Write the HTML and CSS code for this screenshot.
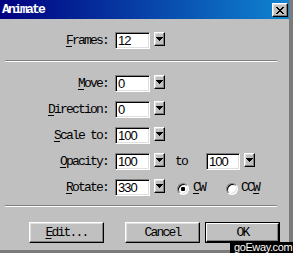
FILE: index.html
```html
<!DOCTYPE html>
<html>
<head>
<meta charset="utf-8">
<link rel="stylesheet" href="styles.css">
</head>
<body>
<div class="window">
  <div class="titlebar">
    <span class="title">Animate</span>
    <span class="close">
      <svg width="8" height="7" viewBox="0 0 8 7" shape-rendering="crispEdges"><path d="M0 0h2v1H0zM6 0h2v1H6zM1 1h2v1H1zM5 1h2v1H5zM2 2h4v1H2zM3 3h2v1H3zM2 4h4v1H2zM1 5h2v1H1zM5 5h2v1H5zM0 6h2v1H0zM6 6h2v1H6z" fill="#000"/></svg>
    </span>
  </div>
  <div class="row frames">
    <span class="lbl"><u>F</u>rames:</span>
    <span class="field">12</span>
    <span class="dd"><svg width="7" height="4" viewBox="0 0 7 4" shape-rendering="crispEdges"><path d="M0 0h7v1H0zM1 1h5v1H1zM2 2h3v1H2zM3 3h1v1H3z" fill="#000"/></svg></span>
  </div>
  <div class="sep"></div>
  <div class="rows">
    <div class="row">
      <span class="lbl"><u>M</u>ove:</span>
      <span class="field">0</span>
      <span class="dd"><svg width="7" height="4" viewBox="0 0 7 4" shape-rendering="crispEdges"><path d="M0 0h7v1H0zM1 1h5v1H1zM2 2h3v1H2zM3 3h1v1H3z" fill="#000"/></svg></span>
    </div>
    <div class="row">
      <span class="lbl"><u>D</u>irection:</span>
      <span class="field">0</span>
      <span class="dd"><svg width="7" height="4" viewBox="0 0 7 4" shape-rendering="crispEdges"><path d="M0 0h7v1H0zM1 1h5v1H1zM2 2h3v1H2zM3 3h1v1H3z" fill="#000"/></svg></span>
    </div>
    <div class="row">
      <span class="lbl"><u>S</u>cale to:</span>
      <span class="field">100</span>
      <span class="dd"><svg width="7" height="4" viewBox="0 0 7 4" shape-rendering="crispEdges"><path d="M0 0h7v1H0zM1 1h5v1H1zM2 2h3v1H2zM3 3h1v1H3z" fill="#000"/></svg></span>
    </div>
    <div class="row">
      <span class="lbl"><u>O</u>pacity:</span>
      <span class="field">100</span>
      <span class="dd"><svg width="7" height="4" viewBox="0 0 7 4" shape-rendering="crispEdges"><path d="M0 0h7v1H0zM1 1h5v1H1zM2 2h3v1H2zM3 3h1v1H3z" fill="#000"/></svg></span>
      <span class="to">to</span>
      <span class="field field2">100</span>
      <span class="dd"><svg width="7" height="4" viewBox="0 0 7 4" shape-rendering="crispEdges"><path d="M0 0h7v1H0zM1 1h5v1H1zM2 2h3v1H2zM3 3h1v1H3z" fill="#000"/></svg></span>
    </div>
    <div class="row">
      <span class="lbl"><u>R</u>otate:</span>
      <span class="field">330</span>
      <span class="dd"><svg width="7" height="4" viewBox="0 0 7 4" shape-rendering="crispEdges"><path d="M0 0h7v1H0zM1 1h5v1H1zM2 2h3v1H2zM3 3h1v1H3z" fill="#000"/></svg></span>
      <span class="radio r1 checked"><span class="dot"></span></span>
      <span class="rlbl cw"><u>C</u>W</span>
      <span class="radio r2"></span>
      <span class="rlbl ccw">CC<u>W</u></span>
    </div>
  </div>
  <div class="sep sep2"></div>
  <div class="buttons">
    <span class="btn edit"><u>E</u>dit...</span>
    <span class="btn cancel">Cancel</span>
    <span class="btn ok"><span class="okin">OK</span></span>
  </div>
</div>
<div class="watermark">goEway.com</div>
</body>
</html>
```

FILE: styles.css
```css
* { box-sizing: border-box; }
html, body { margin: 0; padding: 0; }
body {
  position: relative;
  width: 293px;
  height: 253px;
  overflow: hidden;
  background: #808080;
  font-family: "Liberation Mono", "DejaVu Sans Mono", monospace;
  font-size: 13px;
  color: #000;
}
.window {
  width: 293px;
  height: 253px;
  background: #c0c0c0;
  border-right: 4px solid #7b7b7b;
  border-bottom: 3px solid #7b7b7b;
  display: flex;
  flex-direction: column;
}
.titlebar {
  height: 19px;
  flex: none;
  background: linear-gradient(90deg, #000080 0%, #1084d0 100%);
  display: flex;
  align-items: flex-start;
  justify-content: space-between;
  padding-left: 2px;
}
.title {
  color: #fff;
  font-weight: bold;
  font-size: 13px;
  letter-spacing: -1.8px;
  line-height: 19px;
}
.close {
  width: 16px;
  height: 14px;
  margin-top: 3px;
  margin-right: 1px;
  background: #c0c0c0;
  border: 1px solid;
  border-color: #fff #000 #000 #fff;
  box-shadow: inset -1px -1px #808080, inset 1px 1px #dfdfdf;
  display: flex;
  align-items: center;
  justify-content: center;
}
.close svg { display: block; }
.row {
  display: flex;
  align-items: flex-start;
  height: 17px;
  line-height: 17px;
  flex: none;
}
.frames { margin-top: 13px; }
.lbl {
  width: 108px;
  text-align: right;
  white-space: pre;
  letter-spacing: -1.8px;
}
u { text-decoration: underline; text-underline-offset: 2px; }
.field {
  margin-left: 7px;
  width: 35px;
  height: 17px;
  background: #fff;
  border: 1px solid;
  border-color: #808080 #fff #fff #808080;
  box-shadow: inset 1px 1px #000, inset -1px -1px #dfdfdf;
  font-family: "Liberation Sans", Arial, sans-serif;
  font-size: 13px;
  letter-spacing: -1px;
  line-height: 15px;
  padding-left: 2px;
  overflow: hidden;
}
.dd {
  margin-left: 4px;
  width: 11px;
  height: 14px;
  background: #c0c0c0;
  border: 1px solid;
  border-color: #fff #000 #000 #fff;
  box-shadow: inset -1px -1px #808080, inset 1px 1px #dfdfdf;
  display: flex;
  align-items: center;
  justify-content: center;
}
.dd svg { display: block; }
.sep {
  flex: none;
  margin-top: 11px;
  margin-left: 5px;
  width: 272px;
  height: 2px;
  border-top: 1px solid #808080;
  border-bottom: 1px solid #fff;
}
.rows {
  margin-top: 13px;
  display: flex;
  flex-direction: column;
  gap: 9px;
}
.to {
  margin-left: 10px;
  letter-spacing: -1.8px;
}
.field2 { margin-left: 19px; width: 34px; }
.radio {
  width: 12px;
  height: 12px;
  margin-top: 4px;
  border-radius: 50%;
  background: #fff;
  border: 1px solid;
  border-color: #808080 #fff #fff #808080;
  box-shadow: inset 1px 1px #000, inset -1px -1px #dfdfdf;
  display: flex;
  align-items: center;
  justify-content: center;
}
.r1 { margin-left: 12px; }
.r2 { margin-left: 21px; }
.dot { width: 4px; height: 4px; background: #000; border-radius: 1px; }
.rlbl { letter-spacing: -1.8px; }
.cw { margin-left: 4px; }
.ccw { margin-left: 3px; }
.sep2 { margin-top: 9px; }
.buttons {
  margin-top: 15px;
  padding-left: 29px;
  display: flex;
  flex: none;
}
.btn {
  width: 75px;
  height: 21px;
  background: #c0c0c0;
  border: 1px solid;
  border-color: #fff #000 #000 #fff;
  box-shadow: inset -1px -1px #808080, inset 1px 1px #dfdfdf;
  text-align: center;
  line-height: 19px;
  letter-spacing: -1.8px;
  white-space: pre;
}
.cancel { margin-left: 21px; }
.ok {
  margin-left: 5px;
  border: 1px solid #000;
  box-shadow: none;
  padding: 0;
  display: flex;
}
.okin {
  flex: 1;
  border: 1px solid;
  border-color: #fff #000 #000 #fff;
  box-shadow: inset -1px -1px #808080;
  line-height: 17px;
}
.watermark {
  position: absolute;
  right: 0;
  bottom: 0;
  width: 63px;
  height: 11px;
  background: #000;
  color: #fff;
  font-family: "Liberation Sans", Arial, sans-serif;
  font-size: 11px;
  letter-spacing: -0.4px;
  line-height: 11px;
  padding-left: 4px;
}
```
